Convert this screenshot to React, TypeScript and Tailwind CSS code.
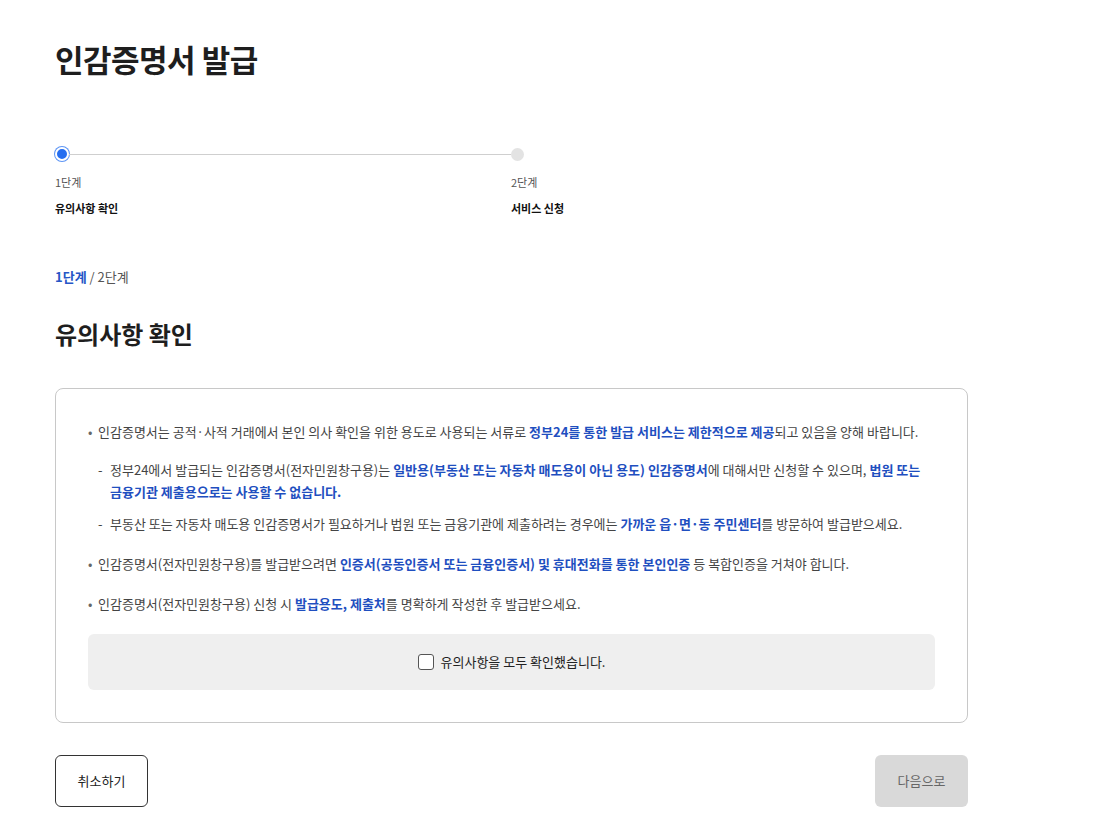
import React from "react";

const B = ({ children }: { children: React.ReactNode }) => (
  <strong className="font-bold text-[#1f4fc0]">{children}</strong>
);

export default function App() {
  return (
    <div
      className="min-h-screen bg-white text-[#1e1e1e]"
      style={{ fontFamily: '"Noto Sans CJK KR", "Noto Sans", sans-serif' }}
    >
      <div className="w-[913px] ml-[55px]">
        {/* Title */}
        <h1 className="pt-[39px] text-[31px] leading-[40px] font-bold tracking-[-0.5px]">인감증명서 발급</h1>

        {/* Stepper */}
        <div className="mt-[68px] flex">
          <div className="w-[456px]">
            <div className="flex items-center">
              <span className="w-[14px] h-[14px] rounded-full bg-[#256ef0] border-2 border-white ring-1 ring-[#5d95f5] shrink-0" />
              <span className="flex-1 h-px bg-[#cfcfcf]" />
            </div>
            <div className="mt-[13px] text-[11px] leading-[16px] text-[#555]">1단계</div>
            <div className="mt-[10px] text-[11px] leading-[16px] font-bold text-[#111]">유의사항 확인</div>
          </div>
          <div>
            <div className="h-[14px] flex items-center">
              <span className="w-[13px] h-[13px] rounded-full bg-[#e3e3e3] shrink-0" />
            </div>
            <div className="mt-[13px] text-[11px] leading-[16px] text-[#555]">2단계</div>
            <div className="mt-[10px] text-[11px] leading-[16px] font-bold text-[#111]">서비스 신청</div>
          </div>
        </div>

        {/* Step indicator */}
        <div className="mt-[52px] text-[13px] leading-[18px]">
          <span className="font-bold text-[#2656c6]">1단계</span>
          <span className="text-[#555]"> / 2단계</span>
        </div>

        <h2 className="mt-[32px] text-[24px] leading-[32px] font-bold">유의사항 확인</h2>

        {/* Notice box */}
        <div className="mt-[38px] border border-[#c8c8c8] rounded-[8px] px-[32px] pt-[32px] pb-[32px]">
          <ul className="text-[13px] leading-[22px] text-[#444]">
            <li className="flex">
              <span className="w-[10px] shrink-0 text-[#666]">•</span>
              <span>
                인감증명서는 공적·사적 거래에서 본인 의사 확인을 위한 용도로 사용되는 서류로{" "}
                <B>정부24를 통한 발급 서비스는 제한적으로 제공</B>되고 있음을 양해 바랍니다.
              </span>
            </li>
            <li className="mt-[16px] ml-[10px] flex">
              <span className="w-[12px] shrink-0">-</span>
              <div>
                <p>
                  정부24에서 발급되는 인감증명서(전자민원창구용)는{" "}
                  <B>일반용(부동산 또는 자동차 매도용이 아닌 용도) 인감증명서</B>에 대해서만 신청할 수 있으며,{" "}
                  <B>법원 또는</B>
                </p>
                <p>
                  <B>금융기관 제출용으로는 사용할 수 없습니다.</B>
                </p>
              </div>
            </li>
            <li className="mt-[10px] ml-[10px] flex">
              <span className="w-[12px] shrink-0">-</span>
              <span>
                부동산 또는 자동차 매도용 인감증명서가 필요하거나 법원 또는 금융기관에 제출하려는 경우에는{" "}
                <B>가까운 읍·면·동 주민센터</B>를 방문하여 발급받으세요.
              </span>
            </li>
            <li className="mt-[18px] flex">
              <span className="w-[10px] shrink-0 text-[#666]">•</span>
              <span>
                인감증명서(전자민원창구용)를 발급받으려면{" "}
                <B>인증서(공동인증서 또는 금융인증서) 및 휴대전화를 통한 본인인증</B> 등 복합인증을 거쳐야 합니다.
              </span>
            </li>
            <li className="mt-[18px] flex">
              <span className="w-[10px] shrink-0 text-[#666]">•</span>
              <span>
                인감증명서(전자민원창구용) 신청 시 <B>발급용도, 제출처</B>를 명확하게 작성한 후 발급받으세요.
              </span>
            </li>
          </ul>

          <label className="mt-[19px] h-[56px] bg-[#efefef] rounded-[6px] flex items-center justify-center gap-[7px] text-[13px] text-[#222]">
            <span className="w-[16px] h-[16px] border border-[#555] rounded-[3px] bg-white" />
            <span>유의사항을 모두 확인했습니다.</span>
          </label>
        </div>

        {/* Buttons */}
        <div className="mt-[32px] flex justify-between">
          <button className="w-[93px] h-[52px] border border-[#333] rounded-[6px] bg-white text-[13px] text-[#222]">
            취소하기
          </button>
          <button className="w-[93px] h-[52px] rounded-[6px] bg-[#d9d9d9] text-[13px] text-[#666]">
            다음으로
          </button>
        </div>
      </div>
    </div>
  );
}
